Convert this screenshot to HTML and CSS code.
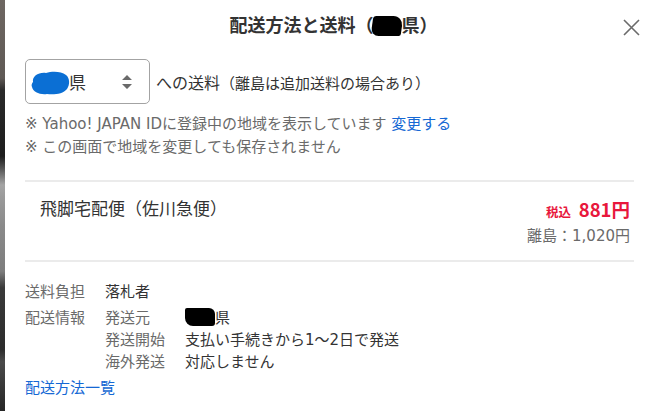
FILE: index.html
```html
<!DOCTYPE html>
<html lang="ja">
<head>
<meta charset="utf-8">
<title>配送方法と送料</title>
<link rel="stylesheet" href="styles.css">
</head>
<body>
<div class="page">
  <div class="backdrop"></div>
  <div class="modal">
    <header class="head">
      <h1 class="title">配送方法と送料（<span class="ink ink-title"></span>県）</h1>
      <button class="close" type="button" aria-label="閉じる">
        <svg viewBox="0 0 17 17" width="17" height="17"><path d="M1 1L16 16M16 1L1 16" stroke="#6b6b6b" stroke-width="1.6" fill="none"/></svg>
      </button>
    </header>

    <div class="region">
      <div class="select">
        <span class="select-value"><svg class="blue-blob" viewBox="0 0 40 26" width="40" height="26"><path d="M3 12C2 6 9 2 16 3C22 1 31 1 36 5C40 8 40 15 37 19C33 24 24 25 17 24C10 25 3 22 2 17C1 15 2 13 3 12Z" fill="#0b6fd4"/></svg>県</span>
        <svg class="arrows" viewBox="0 0 12 18" width="12" height="18"><path d="M1 7L6 2L11 7Z M1 11L6 16L11 11Z" fill="#6a6a6a"/></svg>
      </div>
      <p class="region-text"><span class="to">への送料</span><span class="sub">（離島は追加送料の場合あり）</span></p>
    </div>

    <div class="notes">
      <p>※ Yahoo! JAPAN IDに登録中の地域を表示しています <a class="link" href="#">変更する</a></p>
      <p>※ この画面で地域を変更しても保存されません</p>
    </div>

    <div class="method">
      <div class="method-name">飛脚宅配便（佐川急便）</div>
      <div class="price">
        <div class="price-main"><span class="tax">税込</span> <span class="amount">881円</span></div>
        <div class="price-island">離島：1,020円</div>
      </div>
    </div>

    <div class="info">
      <div class="info-row">
        <div class="info-label">送料負担</div>
        <div class="info-value">落札者</div>
      </div>
      <div class="info-row">
        <div class="info-label">配送情報</div>
        <div class="info-sub">
          <div class="sub-row"><span class="sub-label">発送元</span><span class="sub-value"><span class="ink ink-origin"></span>県</span></div>
          <div class="sub-row"><span class="sub-label">発送開始</span><span class="sub-value">支払い手続きから1～2日で発送</span></div>
          <div class="sub-row"><span class="sub-label">海外発送</span><span class="sub-value">対応しません</span></div>
        </div>
      </div>
    </div>

    <a class="link list-link" href="#">配送方法一覧</a>
  </div>
</div>
</body>
</html>
```

FILE: styles.css
```css
* { box-sizing: border-box; }
html, body { margin: 0; padding: 0; background: #fff; }
body {
  font-family: "DejaVu Sans", "Noto Sans CJK JP", sans-serif;
  color: #333;
  width: 664px;
  height: 411px;
  overflow: hidden;
}
p { margin: 0; }

.page { display: flex; height: 411px; }

.backdrop {
  flex: 0 0 5px;
  background: linear-gradient(to bottom,
    #6e6762 0%, #5f5955 19%, #2a2a2a 22%, #1d1d1d 38%, #555 41%,
    #a4a4a4 45%, #9a9a9a 48%, #8a8a8a 55%, #7d7d7d 66%, #3a3a3a 70%,
    #2c2c2c 85%, #4a4a4a 88%, #262626 100%);
}

.modal {
  flex: 1;
  padding: 0 30px 0 20px;
  display: flex;
  flex-direction: column;
}

.head {
  display: grid;
  grid-template-columns: 1fr auto 1fr;
  align-items: center;
  height: 48px;
  margin-right: -6px;
}
.title {
  grid-column: 2;
  margin: 0;
  font-family: "Noto Sans CJK JP", sans-serif;
  font-size: 18px;
  font-weight: 700;
  color: #333;
  line-height: 48px;
  white-space: nowrap;
  padding-left: 2px;
}
.ink {
  display: inline-block;
  background: #000;
  vertical-align: middle;
}
.ink-title {
  width: 30px;
  height: 20px;
  margin-left: -2px;
  border-radius: 3px 10px 2px 8px;
  transform: translateY(-1px) skewX(-8deg);
}
.ink-origin {
  width: 30px;
  height: 18px;
  border-radius: 2px 6px 3px 8px;
  transform: translateY(-2px);
}
.close {
  grid-column: 3;
  justify-self: end;
  border: 0;
  background: none;
  padding: 0;
  width: 17px;
  height: 17px;
  margin-top: 7px;
  display: flex;
}

.region {
  display: flex;
  align-items: center;
  margin-top: 11px;
}
.select {
  width: 125px;
  height: 45px;
  border: 1px solid #a3a3a3;
  border-radius: 5px;
  display: flex;
  align-items: center;
  justify-content: space-between;
  padding: 0 16px 0 4px;
  flex: 0 0 auto;
}
.select-value {
  display: flex;
  align-items: center;
  font-size: 17px;
  color: #333;
}
.blue-blob { margin-right: -1px; margin-top: 2px; }
.arrows { display: block; }
.region-text {
  margin-left: 6px;
  white-space: nowrap;
  color: #333;
}
.to { font-size: 16px; }
.sub { font-size: 15px; }

.notes {
  margin-top: 9px;
  font-size: 15px;
  line-height: 23px;
  color: #6a6a6a;
}
.link { color: #1568d4; text-decoration: none; }

.method {
  margin-top: 21px;
  border-top: 2px solid #ebebeb;
  border-bottom: 2px solid #ebebeb;
  height: 82px;
  display: flex;
  justify-content: space-between;
  padding: 14px 4px 0 15px;
}
.method-name {
  font-size: 17px;
  line-height: 26px;
  color: #333;
}
.price { text-align: right; }
.price-main {
  color: #e8173c;
  font-family: "Noto Sans CJK JP", sans-serif;
  font-weight: 700;
  line-height: 26px;
  white-space: nowrap;
}
.tax { font-size: 12.5px; margin-right: 4px; }
.amount { font-size: 18.5px; }
.price-island {
  font-size: 15px;
  color: #6a6a6a;
  line-height: 22px;
}

.info {
  margin-top: 19px;
  font-size: 15px;
  line-height: 22px;
  display: flex;
  flex-direction: column;
  gap: 4px;
}
.info-row { display: flex; }
.info-label { width: 80px; color: #6a6a6a; flex: 0 0 80px; }
.info-value { color: #333; }
.info-sub { display: flex; flex-direction: column; }
.sub-row { display: flex; }
.sub-label { width: 80px; flex: 0 0 80px; color: #6a6a6a; }
.sub-value { color: #333; white-space: nowrap; }

.list-link {
  margin-top: 4px;
  font-size: 15px;
  line-height: 22px;
  align-self: flex-start;
}
```
